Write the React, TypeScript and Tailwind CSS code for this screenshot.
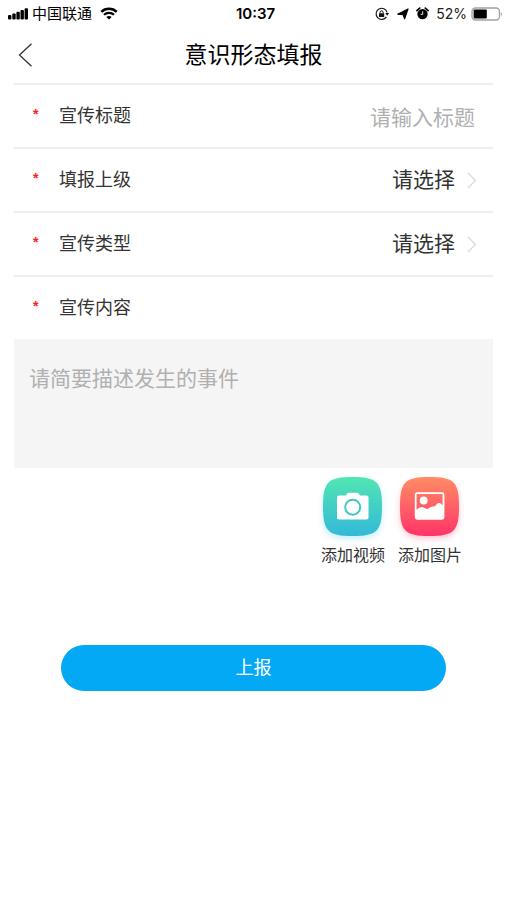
import { useState } from 'react';
import type { ReactNode } from 'react';

function SignalIcon() {
  return (
    <svg width="21" height="12" viewBox="0 0 21 12" fill="#000" aria-hidden="true">
      <rect x="0" y="7" width="3.4" height="4.5" rx="1" />
      <rect x="4.3" y="5.5" width="3.4" height="6" rx="1" />
      <rect x="8.4" y="3.8" width="3.4" height="7.7" rx="1" />
      <rect x="12.5" y="2" width="3.4" height="9.5" rx="1" />
      <rect x="16.6" y="0.3" width="3.4" height="11.2" rx="1" />
    </svg>
  );
}

function WifiIcon() {
  return (
    <svg width="18" height="13" viewBox="0 0 18 13" fill="none" stroke="#000" aria-hidden="true">
      <path d="M1.3 4.8C5.5 0.7 12.5 0.7 16.7 4.8" strokeWidth="2.5" />
      <path d="M4 7.8C6.8 5.1 11.2 5.1 14 7.8" strokeWidth="2.2" />
      <path d="M9 12.6L6.3 9.9C7.8 8.6 10.2 8.6 11.7 9.9Z" fill="#000" stroke="none" />
    </svg>
  );
}

function RotationLockIcon() {
  return (
    <svg width="14" height="14" viewBox="0 0 14 14" fill="none" stroke="#111" aria-hidden="true">
      <path d="M11.4 9.9A5.6 5.6 0 1 1 12.1 5.3" strokeWidth="1.1" />
      <path d="M10.3 6H14L12.2 8.8Z" fill="#111" stroke="none" />
      <rect x="4" y="6.3" width="5.2" height="3.7" rx="0.5" fill="#111" stroke="none" />
      <path d="M5.1 6.5V5.3a1.5 1.5 0 0 1 3 0v1.2" strokeWidth="1" />
    </svg>
  );
}

function LocationIcon() {
  return (
    <svg width="12" height="12" viewBox="0 0 12 12" fill="#000" aria-hidden="true">
      <path d="M11 1L7.6 10.8L6.2 6.7L0.8 6.2Z" stroke="#000" strokeWidth="1.2" strokeLinejoin="round" />
    </svg>
  );
}

function AlarmIcon() {
  return (
    <svg width="13" height="13" viewBox="0 0 13 13" fill="none" aria-hidden="true">
      <circle cx="6.5" cy="7.1" r="5.2" fill="#000" />
      <path d="M0.9 3.6L3.7 1.1M12.1 3.6L9.3 1.1" stroke="#000" strokeWidth="1.7" strokeLinecap="round" />
      <path d="M6.7 4.3V7.4H4.7" stroke="#fff" strokeWidth="0.9" />
    </svg>
  );
}

function BatteryIcon() {
  return (
    <svg width="32" height="14" viewBox="0 0 32 14" fill="none" aria-hidden="true">
      <rect x="1" y="1" width="27.5" height="12" rx="3.5" stroke="#a3a3a3" strokeWidth="1.4" />
      <rect x="2.6" y="2.6" width="13.2" height="8.8" rx="1" fill="#000" />
      <path d="M30 5.2c1.4 0.5 1.4 3.1 0 3.6Z" fill="#a3a3a3" />
    </svg>
  );
}

function Chevron() {
  return (
    <svg width="10" height="17" viewBox="0 0 10 17" fill="none" stroke="#dadada" strokeWidth="1.2" aria-hidden="true">
      <path d="M1 1L8.6 8.5L1 16" />
    </svg>
  );
}

const tilePath =
  'M29.5 0C54 0 59 5 59 29.5S54 59 29.5 59S0 54 0 29.5S5 0 29.5 0Z';

function CameraTile() {
  return (
    <svg className="overflow-visible drop-shadow-[0_3px_3px_rgba(64,200,225,0.3)]" width="59" height="59" viewBox="0 0 59 59" aria-hidden="true">
      <defs>
        <linearGradient id="camera-fill" x1="0" y1="0" x2="0" y2="1">
          <stop offset="0" stopColor="#52e5b2" />
          <stop offset="1" stopColor="#33b9d8" />
        </linearGradient>
      </defs>
      <path d={tilePath} fill="url(#camera-fill)" />
      <path
        fill="#fff"
        d="M16 18.5h7l1.4-2.200c.3-.4.7-.6 1.200-.6h8.800c.5 0 .9.2 1.200.6l1.400 2.200h6.500c1.200 0 2 .8 2 2v20c0 1.200-.8 2-2 2H16c-1.200 0-2-.8-2-2v-20c0-1.200.8-2 2-2Z"
      />
      <circle cx="29.700" cy="30.200" r="7.500" fill="none" stroke="#3fc8c6" strokeWidth="2" />
    </svg>
  );
}

function PictureTile() {
  return (
    <svg className="overflow-visible drop-shadow-[0_3px_3px_rgba(255,70,110,0.3)]" width="59" height="59" viewBox="0 0 59 59" aria-hidden="true">
      <defs>
        <linearGradient id="picture-fill" x1="0" y1="0" x2="0" y2="1">
          <stop offset="0" stopColor="#ff8d65" />
          <stop offset="1" stopColor="#ff3468" />
        </linearGradient>
      </defs>
      <path d={tilePath} fill="url(#picture-fill)" />
      <rect x="15.700" y="16.200" width="27.800" height="25.600" rx="1.500" fill="none" stroke="#fff" strokeWidth="1.800" />
      <circle cx="23.700" cy="23.500" r="3.900" fill="#fff" />
      <path
        fill="#fff"
        d="M16 33C18.500 31.500 20.500 29.500 22.500 30C25 30.600 26.500 33 28.500 31.500C30.500 30 31.500 29.500 33.500 29.500C36 29.500 36.500 26 39 26C41 26 42 28 43.500 29V41.500H16Z"
      />
    </svg>
  );
}

function FieldRow({ id, label, children }: { id: string; label: string; children?: ReactNode }) {
  return (
    <div className="flex h-16 items-center border-t-2 border-[#eeeeee] pl-[19px]">
      <label htmlFor={id} className="flex shrink-0 items-center text-lg text-[#333333]">
        <span className="w-[26px] pb-1 text-sm font-bold leading-6 text-[#ff1a1a]">*</span>
        {label}
      </label>
      {children}
    </div>
  );
}

function SelectField({ id, label }: { id: string; label: string }) {
  return (
    <FieldRow id={id} label={label}>
      <div className="ml-auto flex items-center gap-3 pr-4">
        <select id={id} className="appearance-none bg-transparent text-[21px] leading-8 text-[#333333] outline-none">
          <option>请选择</option>
        </select>
        <Chevron />
      </div>
    </FieldRow>
  );
}

export default function App() {
  const [title, setTitle] = useState('');
  const [content, setContent] = useState('');

  return (
    <div className="min-h-screen bg-white font-['Liberation_Sans','Noto_Sans_CJK_SC',sans-serif]">
      <div className="grid h-[27px] grid-cols-[1fr_auto_1fr] items-center pl-2 pr-1 text-black">
        <div className="flex items-center">
          <SignalIcon />
          <span className="ml-[3px] mr-2 text-[15px] leading-5">中国联通</span>
          <WifiIcon />
        </div>
        <span className="font-['Inter',sans-serif] text-[15px] font-semibold leading-5">10:37</span>
        <div className="flex items-center justify-end">
          <RotationLockIcon />
          <span className="ml-2 flex"><LocationIcon /></span>
          <span className="ml-[7px] flex"><AlarmIcon /></span>
          <span className="ml-[7px] mr-1 font-['Inter',sans-serif] text-sm text-[#222222]">52%</span>
          <BatteryIcon />
        </div>
      </div>

      <header className="grid h-14 grid-cols-[1fr_auto_1fr] items-center px-[18px]">
        <button type="button" aria-label="返回" className="flex w-6 cursor-pointer">
          <svg width="15" height="24" viewBox="0 0 15 24" fill="none" stroke="#333" strokeWidth="1.3" aria-hidden="true">
            <path d="M13.500 0.800L1.500 12L13.500 23.200" />
          </svg>
        </button>
        <h1 className="text-[23px] leading-8 text-black">意识形态填报</h1>
      </header>

      <form className="px-[14px]" onSubmit={(event) => event.preventDefault()}>
        <FieldRow id="title" label="宣传标题">
          <input
            id="title"
            type="text"
            value={title}
            onChange={(event) => setTitle(event.target.value)}
            placeholder="请输入标题"
            className="min-w-0 flex-1 pr-[18px] pt-1 text-right text-[21px] leading-8 text-[#333333] outline-none placeholder:text-[#b0b0b0]"
          />
        </FieldRow>
        <SelectField id="superior" label="填报上级" />
        <SelectField id="type" label="宣传类型" />
        <FieldRow id="content" label="宣传内容" />
        <textarea
          id="content"
          value={content}
          onChange={(event) => setContent(event.target.value)}
          placeholder="请简要描述发生的事件"
          className="block h-[129px] w-full resize-none bg-[#f5f5f5] px-[15px] py-6 text-[21px] leading-8 text-[#333333] outline-none placeholder:text-[#b0b0b0]"
        />

        <div className="mt-[9px] flex justify-end gap-[13px] pr-[31px]">
          <button type="button" className="flex cursor-pointer flex-col items-center gap-2 text-base text-[#333333]">
            <CameraTile />
            添加视频
          </button>
          <button type="button" className="flex cursor-pointer flex-col items-center gap-2 text-base text-[#333333]">
            <PictureTile />
            添加图片
          </button>
        </div>

        <div className="px-[47px] pt-[77px]">
          <button type="submit" className="h-[46px] w-full cursor-pointer rounded-full bg-[#03a9f4] text-lg text-white">
            上报
          </button>
        </div>
      </form>
    </div>
  );
}
